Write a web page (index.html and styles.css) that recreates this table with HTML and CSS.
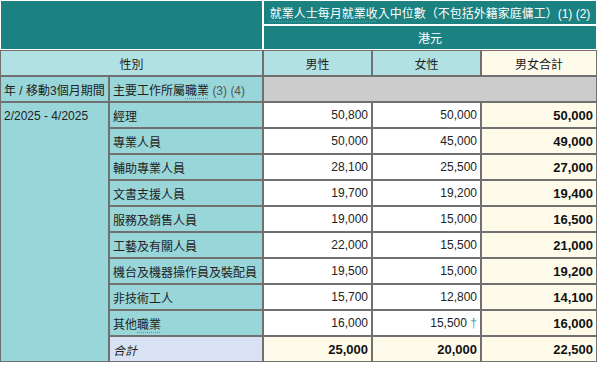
FILE: index.html
```html
<!DOCTYPE html>
<html lang="zh-Hant">
<head>
<meta charset="utf-8">
<link rel="stylesheet" href="styles.css">
</head>
<body>
<table class="tbl">
  <colgroup>
    <col class="c1"><col class="c2"><col class="c3"><col class="c4"><col class="c5">
  </colgroup>
  <thead>
    <tr>
      <th class="hd corner" colspan="2" rowspan="2"></th>
      <th class="hd title" colspan="3"><span class="term">就業人士每月就業收</span>入中位數（不包括外籍家庭傭工）(1) (2)</th>
    </tr>
    <tr>
      <th class="hd" colspan="3">港元</th>
    </tr>
    <tr>
      <th class="lt" colspan="2">性別</th>
      <th class="lt">男性</th>
      <th class="lt">女性</th>
      <th class="cr">男女合計</th>
    </tr>
    <tr>
      <th class="cy left">年 / 移動3個月期間</th>
      <th class="cy left">主要工作所屬<span class="term">職業</span> <span class="note">(3) (4)</span></th>
      <th class="gr" colspan="3"></th>
    </tr>
  </thead>
  <tbody>
    <tr>
      <td class="cy period" rowspan="10">2/2025 - 4/2025</td>
      <td class="cy">經理</td><td class="num">50,800</td><td class="num">50,000</td><td class="num cr b">50,000</td>
    </tr>
    <tr><td class="cy">專業人員</td><td class="num">50,000</td><td class="num">45,000</td><td class="num cr b">49,000</td></tr>
    <tr><td class="cy">輔助專業人員</td><td class="num">28,100</td><td class="num">25,500</td><td class="num cr b">27,000</td></tr>
    <tr><td class="cy">文書支援人員</td><td class="num">19,700</td><td class="num">19,200</td><td class="num cr b">19,400</td></tr>
    <tr><td class="cy">服務及銷售人員</td><td class="num">19,000</td><td class="num">15,000</td><td class="num cr b">16,500</td></tr>
    <tr><td class="cy">工藝及有關人員</td><td class="num">22,000</td><td class="num">15,500</td><td class="num cr b">21,000</td></tr>
    <tr><td class="cy">機台及機器操作員及裝配員</td><td class="num">19,500</td><td class="num">15,000</td><td class="num cr b">19,200</td></tr>
    <tr><td class="cy">非技術工人</td><td class="num">15,700</td><td class="num">12,800</td><td class="num cr b">14,100</td></tr>
    <tr><td class="cy">其他<span class="term">職業</span></td><td class="num">16,000</td><td class="num">15,500 <span class="dag">†</span></td><td class="num cr b">16,000</td></tr>
    <tr><td class="lav it">合計</td><td class="num cr b">25,000</td><td class="num cr b">20,000</td><td class="num cr b">22,500</td></tr>
  </tbody>
</table>
</body>
</html>
```

FILE: styles.css
```css
html, body {
  margin: 0;
  padding: 0;
  background: #ffffff;
}

.tbl {
  width: 597px;
  table-layout: fixed;
  border-collapse: separate;
  border-spacing: 0;
  font-family: "Liberation Sans", "Noto Sans CJK TC", sans-serif;
  font-size: 12px;
  color: #222;
}

.c1 { width: 109px; }
.c2 { width: 154px; }
.c3 { width: 109px; }
.c4 { width: 109px; }
.c5 { width: 116px; }

.tbl tr { height: 26px; }

.tbl th, .tbl td {
  border: 1px solid #707070;
  padding: 0 3px;
  font-weight: normal;
  vertical-align: middle;
  white-space: nowrap;
  overflow: hidden;
}

.tbl thead tr:first-child,
.tbl thead tr:nth-child(2) { height: 25px; }

.tbl .hd {
  background: #1b8181;
  color: #fff;
  border-color: #fff;
  text-align: center;
}

.term {
  text-decoration: underline dotted #5c8fd6;
  text-underline-offset: 3px;
}

.lt {
  background: #b1e1e2;
  text-align: center;
}

.cr {
  background: #fffbeb;
  text-align: center;
}

.cy {
  background: #98d6d9;
  text-align: left;
}

.left { text-align: left; }

.note { color: #555; }

.gr { background: #cccccc; }

.tbl .period { vertical-align: top; padding-top: 6px; }

.num {
  text-align: right;
  background: #fff;
}

.num.cr { background: #fffbeb; text-align: right; }

.tbl .b { font-weight: bold; font-size: 13px; color: #111; }

.lav { background: #d9e2f3; }

.it { font-style: italic; }

.dag { color: #4a8fc0; }
```
